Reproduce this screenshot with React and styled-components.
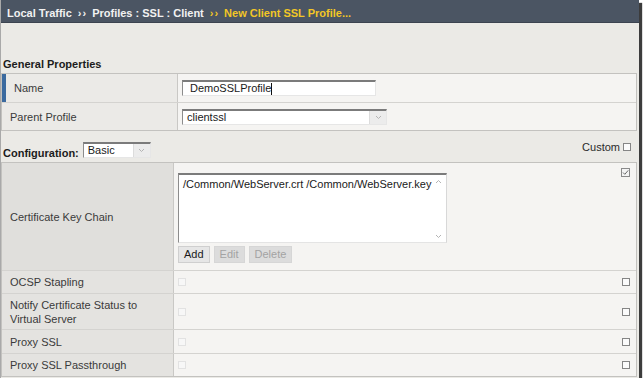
import React from 'react'
import styled, { createGlobalStyle } from 'styled-components'

const Global = createGlobalStyle`
  body {
    margin: 0;
    background: #ffffff;
    font-family: "Liberation Sans", Arial, sans-serif;
  }
`

const Frame = styled.div`
  width: 639px;
  height: 378px;
  box-sizing: border-box;
  background: #ebeae6;
  border-left: 1px solid #a9a9a9;
  box-shadow: 3px 3px 1px #3c3c3c;
  overflow: hidden;
  display: flex;
  flex-direction: column;
  font-size: 11px;
  color: #3a3a3a;
`

const Header = styled.div`
  height: 23px;
  box-sizing: border-box;
  padding: 3px 0 0 6px;
  line-height: 20px;
  background: #4b5563;
  border-bottom: 1px solid #3c4450;
  color: #f1f1f1;
  font-weight: bold;
  white-space: nowrap;
`

const Crumb = styled.span`
  color: ${p => (p.$current ? '#f2c626' : '#f1f1f1')};
`

const Sep = styled.span`
  margin: 0 5px 0 6px;
  letter-spacing: 1px;
  color: ${p => (p.$current ? '#f2c626' : '#f1f1f1')};
`

const SectionTitle = styled.div`
  margin-top: 32px;
  height: 18px;
  line-height: 18px;
  padding-left: 2px;
  font-weight: bold;
  color: #1c1c1c;
`

const Table = styled.div`
  width: 636px;
  box-sizing: border-box;
  border: 1px solid #c3c2bf;
  background: #f5f4f2;
`

const Row = styled.div`
  display: grid;
  grid-template-columns: ${p => p.$label}px 1fr ${p => (p.$check ? '20px' : '0px')};
  height: ${p => p.$h}px;
  box-sizing: border-box;
  border-top: 1px solid #d4d3d0;
  &:first-child {
    border-top: none;
  }
`

const Label = styled.div`
  display: flex;
  align-items: center;
  box-sizing: border-box;
  padding: 0 8px;
  line-height: 14px;
  background: ${p => p.$shade || '#ebeae7'};
  border-right: 1px solid #c9c8c5;
  border-left: ${p => (p.$marked ? '4px solid #3b6a9f' : 'none')};
`

const Value = styled.div`
  display: flex;
  flex-direction: ${p => (p.$stack ? 'column' : 'row')};
  align-items: ${p => (p.$stack ? 'flex-start' : 'center')};
  padding: ${p => (p.$stack ? '10px 0 0 4px' : '0 0 0 4px')};
  gap: 3px;
`

const CheckCell = styled.div`
  display: flex;
  justify-content: flex-end;
  align-items: ${p => (p.$top ? 'flex-start' : 'center')};
  padding: ${p => (p.$top ? '5px 6px 0 0' : '0 6px 0 0')};
`

const TextBox = styled.div`
  width: ${p => p.$w}px;
  height: 16px;
  box-sizing: border-box;
  background: #ffffff;
  border-top: 2px solid #7b7b7b;
  border-left: 1px solid #8c8c8c;
  border-right: 1px solid #e6e6e6;
  border-bottom: 1px solid #e6e6e6;
  padding-left: ${p => p.$pad || 4}px;
  line-height: 13px;
  color: #1a1a1a;
  display: flex;
  align-items: center;
`

const Caret = styled.span`
  display: inline-block;
  width: 1px;
  height: 12px;
  background: #111;
`

const Arrow = styled.span`
  margin-left: auto;
  width: 16px;
  align-self: stretch;
  background: #ececec;
  border-left: 1px solid #dcdcdc;
  display: flex;
  align-items: center;
  justify-content: center;
`

const ConfigBar = styled.div`
  height: 31px;
  width: 636px;
  box-sizing: border-box;
  display: flex;
  align-items: flex-end;
  padding: 0 6px 4px 2px;
`

const ConfigLabel = styled.span`
  font-weight: bold;
  color: #1c1c1c;
  line-height: 14px;
  margin: 0 4px -2px 0;
`

const Custom = styled.label`
  margin-left: auto;
  align-self: flex-start;
  margin-top: 9px;
  display: flex;
  align-items: center;
  gap: 3px;
  line-height: 14px;
  color: #2a2a2a;
`

const Box = styled.span`
  display: inline-block;
  width: 8px;
  height: 8px;
  box-sizing: border-box;
  border: 1px solid ${p => (p.$faint ? '#e2e2e2' : '#858585')};
  background: ${p => (p.$faint ? '#f7f7f7' : '#fbfbfb')};
`

const Area = styled.div`
  width: 269px;
  height: 70px;
  box-sizing: border-box;
  background: #ffffff;
  border-top: 2px solid #7b7b7b;
  border-left: 1px solid #8c8c8c;
  border-right: 1px solid #d8d8d8;
  border-bottom: 1px solid #e4e4e4;
  padding: 2px 0 0 4px;
  line-height: 14px;
  color: #1a1a1a;
  position: relative;
`

const ScrollMark = styled.span`
  position: absolute;
  right: 4px;
  ${p => (p.$down ? 'bottom: 3px;' : 'top: 4px;')}
  display: flex;
`

const Buttons = styled.div`
  display: flex;
  gap: 4px;
`

const Button = styled.button`
  height: 17px;
  padding: 0 5px;
  font-family: inherit;
  font-weight: normal;
  font-size: 11px;
  line-height: 15px;
  border: 1px solid ${p => (p.disabled ? '#d6d6d6' : '#cfcfcf')};
  background: ${p => (p.disabled ? '#dcdcdc' : '#e6e6e6')};
  color: ${p => (p.disabled ? '#a3a3a3' : '#1a1a1a')};
  border-radius: 0;
`

const Chevron = ({ up }) => (
  <svg width="7" height="5" viewBox="0 0 7 5">
    <path d={up ? 'M1 4 L3.5 1.5 L6 4' : 'M1 1 L3.5 3.5 L6 1'} fill="none" stroke="#b4b4b4" strokeWidth="1" />
  </svg>
)

const Checked = () => (
  <svg width="9" height="9" viewBox="0 0 9 9">
    <rect x="0.5" y="0.5" width="8" height="8" fill="#f4f4f4" stroke="#8a8a8a" />
    <path d="M2 4.5 L3.8 6.3 L7.2 2.4" fill="none" stroke="#6a6a6a" strokeWidth="1" />
  </svg>
)

const options = [
  { label: 'OCSP Stapling', h: 23 },
  { label: 'Notify Certificate Status to Virtual Server', h: 36 },
  { label: 'Proxy SSL', h: 24 },
  { label: 'Proxy SSL Passthrough', h: 23 },
]

const App = () => {
  return (
    <>
      <Global />
      <Frame>
        <Header>
          <Crumb>Local Traffic</Crumb>
          <Sep>››</Sep>
          <Crumb>Profiles : SSL : Client</Crumb>
          <Sep $current>››</Sep>
          <Crumb $current>New Client SSL Profile...</Crumb>
        </Header>

        <SectionTitle>General Properties</SectionTitle>
        <Table>
          <Row $label={176} $h={28}>
            <Label $marked>Name</Label>
            <Value>
              <TextBox $w={194} $pad={7}>
                DemoSSLProfile<Caret />
              </TextBox>
            </Value>
          </Row>
          <Row $label={176} $h={28}>
            <Label>Parent Profile</Label>
            <Value>
              <TextBox $w={205}>
                clientssl
                <Arrow><Chevron /></Arrow>
              </TextBox>
            </Value>
          </Row>
        </Table>

        <ConfigBar>
          <ConfigLabel>Configuration:</ConfigLabel>
          <TextBox $w={68} $pad={4}>
            Basic
            <Arrow><Chevron /></Arrow>
          </TextBox>
          <Custom>
            Custom <Box />
          </Custom>
        </ConfigBar>

        <Table>
          <Row $label={172} $h={107} $check>
            <Label $shade="#e0dfdc">Certificate Key Chain</Label>
            <Value $stack>
              <Area>
                /Common/WebServer.crt /Common/WebServer.key
                <ScrollMark><Chevron up /></ScrollMark>
                <ScrollMark $down><Chevron /></ScrollMark>
              </Area>
              <Buttons>
                <Button>Add</Button>
                <Button disabled>Edit</Button>
                <Button disabled>Delete</Button>
              </Buttons>
            </Value>
            <CheckCell $top>
              <Checked />
            </CheckCell>
          </Row>
          {options.map(o => (
            <Row key={o.label} $label={172} $h={o.h} $check>
              <Label $shade="#e4e3e0">{o.label}</Label>
              <Value>
                <Box $faint />
              </Value>
              <CheckCell>
                <Box />
              </CheckCell>
            </Row>
          ))}
        </Table>
      </Frame>
    </>
  )
}

export default App
